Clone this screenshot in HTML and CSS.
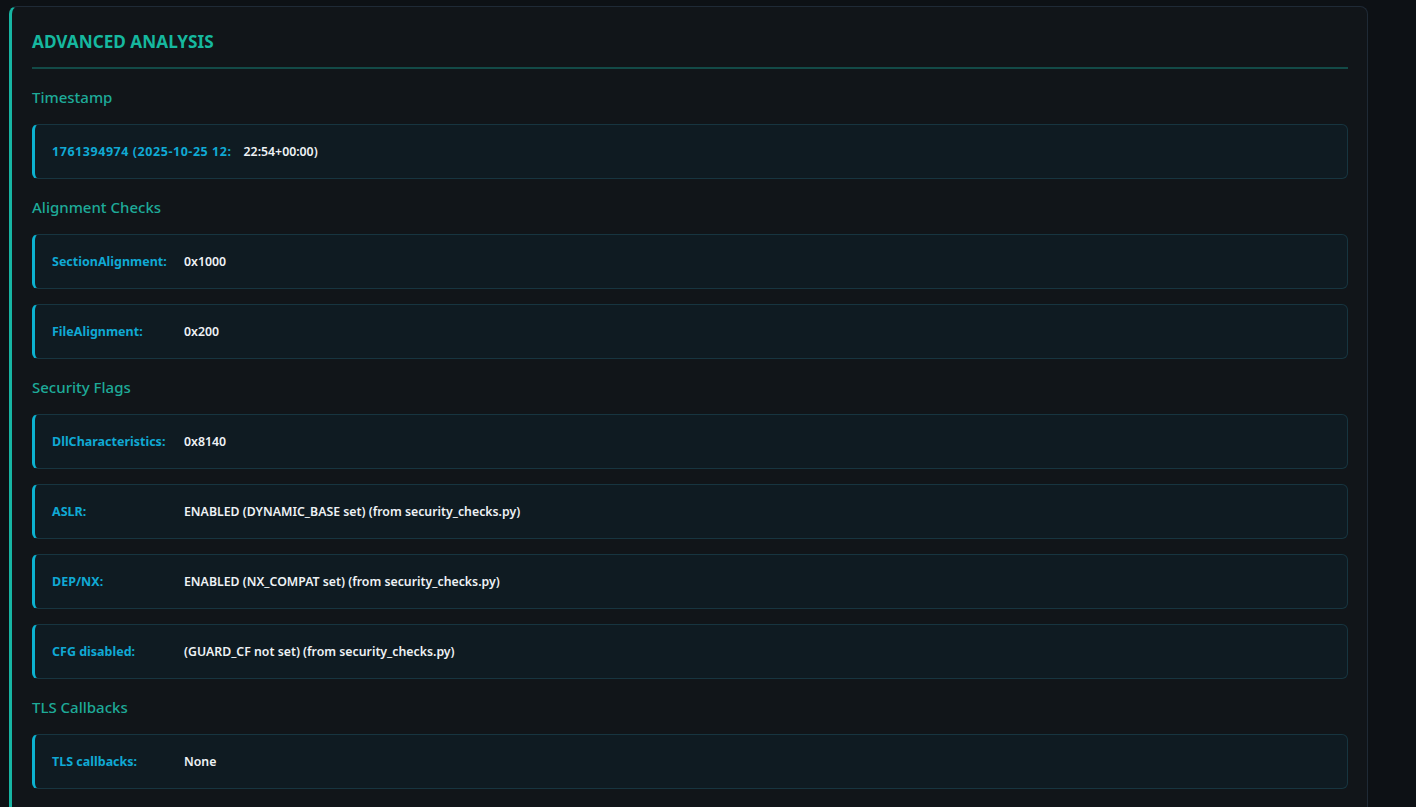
FILE: index.html
```html
<!DOCTYPE html>
<html lang="en">
<head>
<meta charset="utf-8">
<title>Advanced Analysis</title>
<link rel="stylesheet" href="styles.css">
</head>
<body>
<div class="page">
  <section class="panel">
    <h2 class="panel-title">ADVANCED ANALYSIS</h2>

    <h3 class="group-title">Timestamp</h3>
    <div class="row"><span class="label label-wide">1761394974 (2025-10-25 12:</span><span class="value">22:54+00:00)</span></div>

    <h3 class="group-title">Alignment Checks</h3>
    <div class="row"><span class="label">SectionAlignment:</span><span class="value">0x1000</span></div>
    <div class="row"><span class="label">FileAlignment:</span><span class="value">0x200</span></div>

    <h3 class="group-title">Security Flags</h3>
    <div class="row"><span class="label">DllCharacteristics:</span><span class="value">0x8140</span></div>
    <div class="row"><span class="label">ASLR:</span><span class="value">ENABLED (DYNAMIC_BASE set) (from security_checks.py)</span></div>
    <div class="row"><span class="label">DEP/NX:</span><span class="value">ENABLED (NX_COMPAT set) (from security_checks.py)</span></div>
    <div class="row"><span class="label">CFG disabled:</span><span class="value">(GUARD_CF not set) (from security_checks.py)</span></div>

    <h3 class="group-title">TLS Callbacks</h3>
    <div class="row"><span class="label">TLS callbacks:</span><span class="value">None</span></div>
  </section>
</div>
</body>
</html>
```
FILE: styles.css
```css
html, body {
  margin: 0;
  padding: 0;
  background: #0d1115;
  height: 100%;
  overflow: hidden;
}
body {
  font-family: "Noto Sans", "Open Sans", sans-serif;
  color: #e6edf3;
}
.page {
  padding: 6px 48px 0 9px;
}
.panel {
  background: #111519;
  border: 1px solid #1f2a36;
  border-left: 3px solid #17b5a3;
  border-radius: 8px;
  padding: 23px 19px 40px 20px;
  min-height: 900px;
}
.panel-title {
  margin: 0 0 18px 0;
  padding: 0 0 13px 0;
  font-size: 17.2px;
  line-height: 24px;
  font-weight: 700;
  color: #16b89f;
  border-bottom: 2px solid #134a47;
}
.group-title {
  margin: 0 0 17px 0;
  font-size: 15px;
  line-height: 20px;
  font-weight: 500;
  color: #1eaa98;
}
.row + .group-title {
  margin-top: 18px;
}
.row {
  display: flex;
  align-items: center;
  height: 53px;
  padding: 0 18px 0 17px;
  background: #0f1b22;
  border: 1px solid #173540;
  border-left: 3px solid #0cb2d0;
  border-radius: 6px;
}
.row + .row {
  margin-top: 15px;
}
.label {
  min-width: 120px;
  margin-right: 12px;
  font-size: 12.5px;
  font-weight: 700;
  color: #10a9d4;
}
.label-wide {
  letter-spacing: 0.55px;
}
.value {
  font-size: 12.3px;
  font-weight: 600;
  color: #eef2f5;
}
```
